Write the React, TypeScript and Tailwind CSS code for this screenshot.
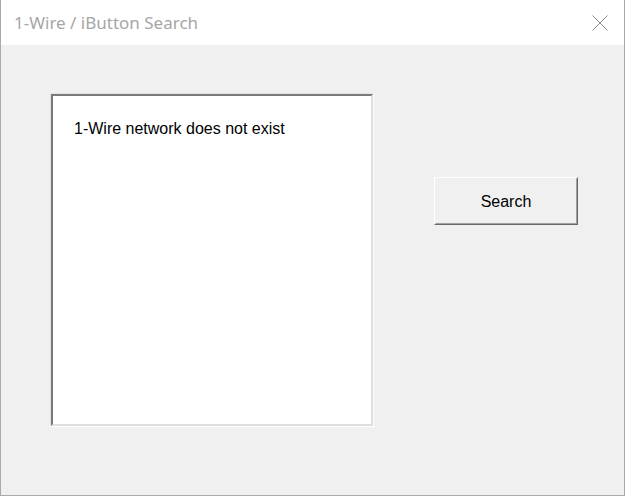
export default function App() {
  return (
    <div className="w-[625px] h-[496px] bg-white">
      <div className="flex h-full w-full flex-col border-x border-b border-[#a9a9a9] bg-[#f0f0f0]">
        <div className="flex h-[45px] shrink-0 items-center justify-between bg-white pl-[13px] pr-[15px]">
          <span className="text-[17px] text-[#a6a6a6] font-['Noto_Sans',sans-serif]">1-Wire / iButton Search</span>
          <svg width="18" height="18" viewBox="0 0 18 18" className="text-[#8a8a8a]">
            <path d="M1.5 1.5 L16.5 16.5 M16.5 1.5 L1.5 16.5" stroke="currentColor" strokeWidth="1" fill="none" />
          </svg>
        </div>
        <div className="flex flex-1 items-start pl-[49px] pt-[48px]">
          <div className="h-[334px] w-[324px] border border-t-[#e3e3e3] border-l-[#e3e3e3] border-r-white border-b-white">
            <div className="h-full w-full border-2 border-t-[#7a7a7a] border-l-[#7a7a7a] border-r-[#dedede] border-b-[#dedede] bg-white">
              <div className="pl-[21px] pt-[21px] text-[16px] text-black font-['Liberation_Sans',sans-serif]">
                1-Wire network does not exist
              </div>
            </div>
          </div>
          <button
            type="button"
            className="ml-[60px] mt-[84px] h-[48px] w-[144px] border border-t-white border-l-white border-r-[#696969] border-b-[#696969] bg-[#f0f0f0]"
          >
            <span className="flex h-full w-full items-center justify-center border border-t-[#f0f0f0] border-l-[#f0f0f0] border-r-[#a0a0a0] border-b-[#a0a0a0] pt-[2px] text-[16px] text-black font-['Liberation_Sans',sans-serif]">
              Search
            </span>
          </button>
        </div>
      </div>
    </div>
  );
}
